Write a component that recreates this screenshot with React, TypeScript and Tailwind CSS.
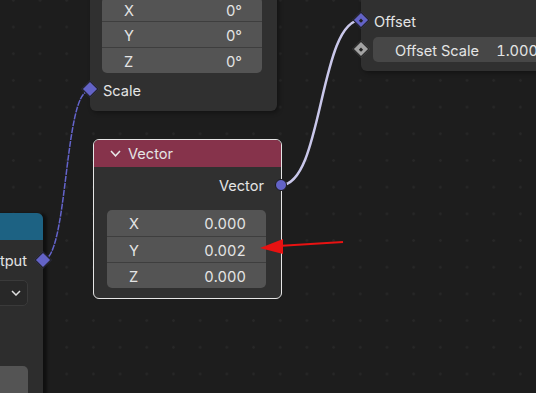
import React from 'react';

const font = { fontFamily: 'Inter, "Noto Sans", sans-serif' };

function Diamond({ color = 'bg-[#6363c7]', dot = false }: { color?: string; dot?: boolean }) {
  return (
    <div className={`w-[12px] h-[12px] rotate-45 border border-[#1c1c1c] ${color} flex items-center justify-center`}>
      {dot && <div className="w-[3px] h-[3px] bg-[#222]" />}
    </div>
  );
}

function FieldRows({ rows, tallFirst = true }: { rows: [string, string][]; tallFirst?: boolean }) {
  return (
    <div className="rounded-[5px] bg-[#545454] overflow-hidden">
      {rows.map(([k, v], i) => (
        <div
          key={k}
          className={`flex items-center justify-between pl-[22px] pr-[20px] ${
            i > 0 ? 'h-[26px] pt-[2px] border-t border-[#3e3e3e]' : tallFirst ? 'h-[26px] pt-[2px]' : 'h-[24px] pt-[4px]'
          }`}
        >
          <span>{k}</span>
          <span>{v}</span>
        </div>
      ))}
    </div>
  );
}

export default function App() {
  return (
    <div
      style={font}
      className="relative w-[536px] h-[393px] overflow-hidden bg-[#1d1d1d] text-[14.6px] leading-[18px] text-[#e4e4e4] tabular-nums bg-[radial-gradient(circle,#272727_1px,transparent_1.6px)] bg-[size:26.7px_26.7px] bg-[position:0px_-13px]"
    >
      {/* links */}
      <svg className="absolute inset-0" width="536" height="393">
        <path d="M 43 260 C 68 260, 64 91, 89 91" fill="none" stroke="#6464cc" strokeWidth="1.5" strokeDasharray="6 1" />
        <path d="M 281 185 C 323 185, 319 20, 361 20" fill="none" stroke="#c9c7ea" strokeWidth="2.5" />
      </svg>

      {/* top-left node */}
      <div className="absolute left-[90px] top-[-46px] w-[187px] h-[157px] rounded-[6px] bg-[#303030] shadow-[2px_2px_4px_rgba(0,0,0,0.35)]">
        <div className="pt-[43px] pl-[12px] pr-[15px]">
          <FieldRows rows={[['X', '0°'], ['Y', '0°'], ['Z', '0°']]} tallFirst={false} />
        </div>
        <div className="relative h-[32px] flex items-center pl-[13px] pt-[4px]">
          <span>Scale</span>
          <div className="absolute left-[-6px] top-[10px]">
            <Diamond />
          </div>
        </div>
      </div>

      {/* top-right node */}
      <div className="absolute left-[361px] top-[-30px] w-[220px] h-[101px] rounded-[6px] bg-[#303030] shadow-[2px_2px_4px_rgba(0,0,0,0.35)]">
        <div className="relative mt-[38px] h-[24px] flex items-center pl-[13px] pt-[4px]">
          <span>Offset</span>
          <div className="absolute left-[-6px] top-[6px]">
            <Diamond dot />
          </div>
        </div>
        <div className="relative mt-[5px] flex items-center">
          <div className="absolute left-[-6px] top-[6px]">
            <Diamond color="bg-[#a3a3a3]" dot />
          </div>
          <div className="ml-[12px] w-[185px] h-[25px] pt-[2px] rounded-[5px] bg-[#474747] flex items-center justify-between pl-[22px] pr-[20px]">
            <span>Offset Scale</span>
            <span>1.000</span>
          </div>
        </div>
      </div>

      {/* left node (cut off) */}
      <div className="absolute left-[-160px] top-[213px] w-[203px] h-[200px] rounded-t-[6px] bg-[#2d2d2d] shadow-[4px_0px_3px_rgba(0,0,0,0.45)]">
        <div className="h-[27px] rounded-t-[6px] bg-[#1d6283]" />
        <div className="relative h-[40px] flex items-center justify-end pr-[16px] pt-[2px]">
          <span>Output</span>
          <div className="absolute right-[-6px] top-[14px]">
            <Diamond />
          </div>
        </div>
        <div className="ml-[20px] mr-[15px] h-[26px] rounded-[5px] bg-[#282828] border border-[#3a3a3a] flex items-center justify-end pr-[6px]">
          <svg width="10" height="6" viewBox="0 0 10 6">
            <path d="M1 1 L5 5 L9 1" fill="none" stroke="#e0e0e0" strokeWidth="1.5" />
          </svg>
        </div>
        <div className="ml-[20px] mr-[15px] mt-[60px] h-[40px] rounded-[5px] bg-[#545454]" />
      </div>

      {/* Vector node (selected) */}
      <div className="absolute left-[93px] top-[139px] w-[189px] h-[160px] rounded-[6px] border border-[#e6e6e6] bg-[#303030]">
        <div className="h-[27px] rounded-t-[5px] bg-[#86334b] flex items-center pl-[16px] gap-[7px]">
          <svg width="11" height="7" viewBox="0 0 11 7">
            <path d="M1 1 L5.5 5.8 L10 1" fill="none" stroke="#e8e8e8" strokeWidth="1.5" />
          </svg>
          <span>Vector</span>
        </div>
        <div className="relative mt-[6px] h-[24px] flex items-center justify-end pr-[17px] pt-[2px]">
          <span>Vector</span>
          <div className="absolute right-[-6px] top-[6px] w-[12px] h-[12px] rounded-full bg-[#6363c7] border border-[#1a1a1a]" />
        </div>
        <div className="mt-[13px] ml-[13px] mr-[15px]">
          <FieldRows rows={[['X', '0.000'], ['Y', '0.002'], ['Z', '0.000']]} />
        </div>
      </div>

      {/* red arrow */}
      <svg className="absolute inset-0 pointer-events-none" width="536" height="393">
        <line x1="343" y1="242" x2="278" y2="246" stroke="#e81212" strokeWidth="2" />
        <polygon points="260,248 283,239 283,254" fill="#e81212" />
      </svg>
    </div>
  );
}
